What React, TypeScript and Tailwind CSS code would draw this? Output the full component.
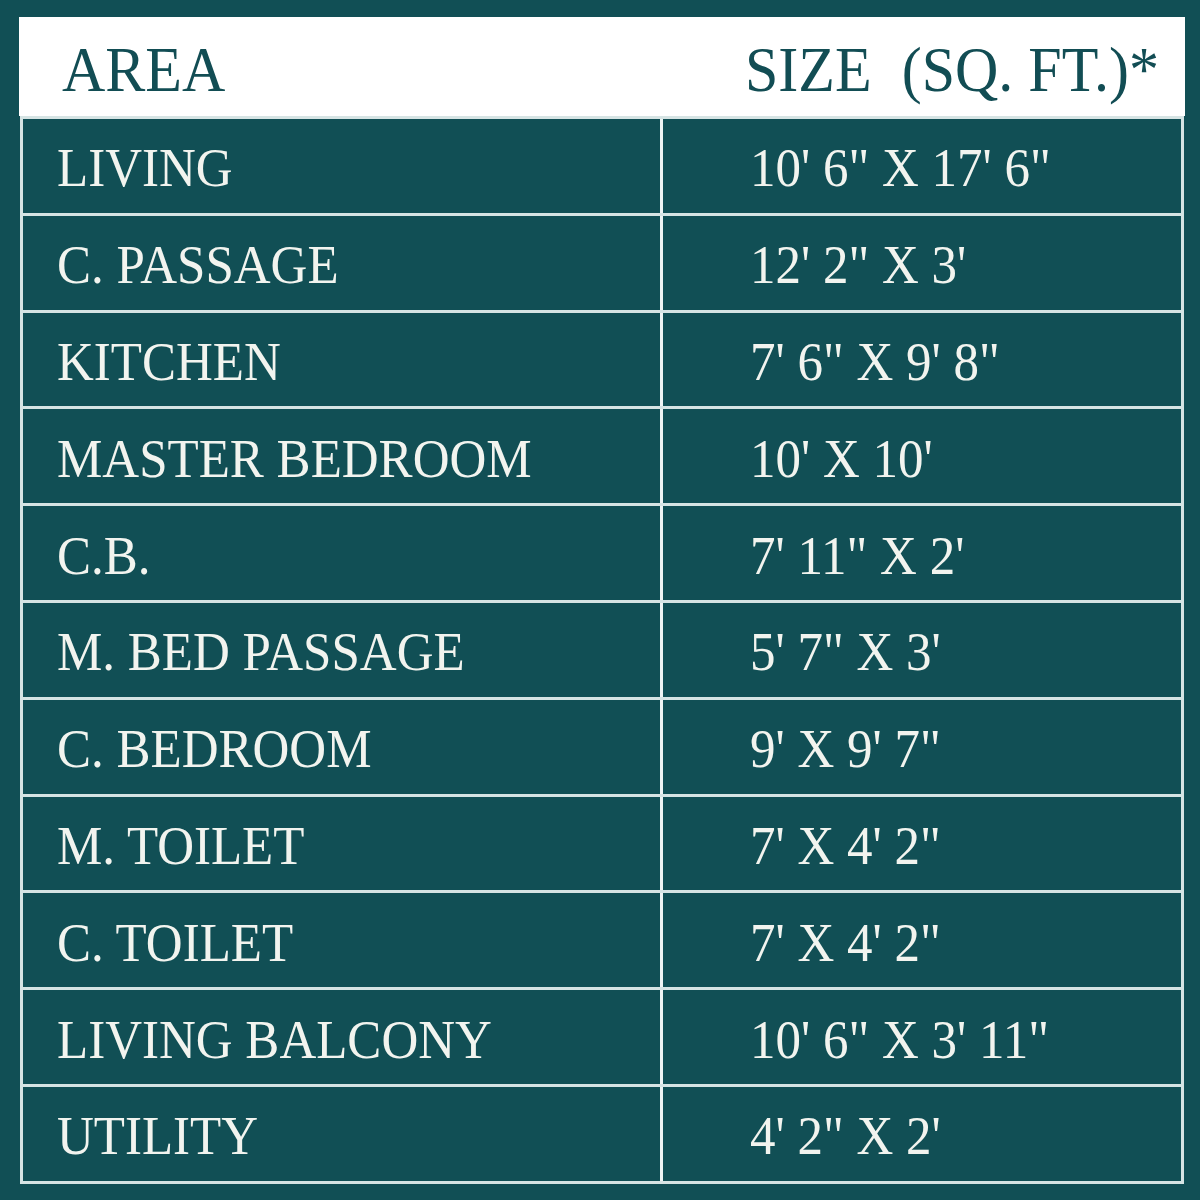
const rows: [string, string][] = [
  ['LIVING', `10' 6" X 17' 6"`],
  ['C. PASSAGE', `12' 2" X 3'`],
  ['KITCHEN', `7' 6" X 9' 8"`],
  ['MASTER BEDROOM', `10' X 10'`],
  ['C.B.', `7' 11" X 2'`],
  ['M. BED PASSAGE', `5' 7" X 3'`],
  ['C. BEDROOM', `9' X 9' 7"`],
  ['M. TOILET', `7' X 4' 2"`],
  ['C. TOILET', `7' X 4' 2"`],
  ['LIVING BALCONY', `10' 6" X 3' 11"`],
  ['UTILITY', `4' 2" X 2'`],
];

export default function App() {
  return (
    <div
      className="w-[1200px] h-[1200px] bg-[#114f55] pt-[17px]"
      style={{ fontFamily: '"Liberation Serif", "Times New Roman", serif' }}
    >
      {/* Header strip */}
      <div className="ml-[19px] w-[1166px] h-[99px] bg-white flex items-center text-[60px] leading-none text-[#124d54]">
        <span className="w-[726px] pl-[43px] pt-[6px]">
          <span className="inline-block scale-y-[1.05]">AREA</span>
        </span>
        <span className="pt-[6px] whitespace-pre">
          <span className="inline-block scale-y-[1.05]">SIZE  (SQ. FT.)*</span>
        </span>
      </div>

      {/* Table body */}
      <div className="ml-[20px] w-[1164px] border-x-[3px] border-b-[3px] border-[#d6e4e4]">
        {rows.map(([area, size]) => (
          <div
            key={area}
            className="h-[96.8px] border-t-[3px] border-[#d6e4e4] grid grid-cols-[637px_1fr] text-[51px] leading-none text-[#f2f4ef]"
          >
            <div className="flex items-center pl-[34px] pt-[6px]">
              <span className="inline-block scale-y-[1.08]">{area}</span>
            </div>
            <div className="flex items-center pl-[87px] pt-[6px] border-l-[3px] border-[#eef4f4]">
              <span className="inline-block scale-y-[1.08]">{size}</span>
            </div>
          </div>
        ))}
      </div>
    </div>
  );
}
